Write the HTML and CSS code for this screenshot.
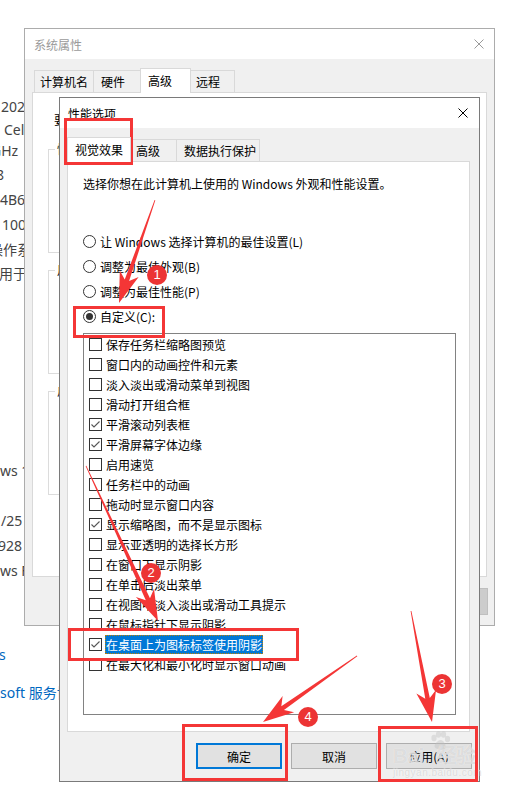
FILE: index.html
```html
<!DOCTYPE html>
<html lang="zh-CN">
<head>
<meta charset="utf-8">
<title>性能选项</title>
<link rel="stylesheet" href="styles.css">
</head>
<body>
<div class="desktop">
  <div class="page">
    <div class="lines lines-a">
      <div class="ln sh-1">2022</div>
      <div class="ln sh-4">Celeron(R) CPU</div>
      <div class="ln sh-n9">GHz</div>
      <div class="ln sh-n4">8</div>
      <div class="ln">4B6-7</div>
      <div class="ln sh-2">1000</div>
      <div class="ln sh-n11">操作系统</div>
      <div class="ln sh-n1">用于</div>
    </div>
    <div class="lines lines-b">
      <div class="ln">ws 10 家庭中文版</div>
      <div class="ln"></div>
      <div class="ln sh-1">/25</div>
      <div class="ln sh-n2">928</div>
      <div class="ln">ws Feature Experience Pack</div>
    </div>
    <div class="lines lines-c">
      <div class="ln sh-n1">s</div>
      <div class="ln"></div>
      <div class="ln">soft 服务协议</div>
    </div>
  </div>

  <section class="win win-outer">
    <header class="titlebar outer-title">
      <span>系统属性</span>
      <span class="close"><svg width="10" height="10" viewBox="0 0 10 10"><path d="M0.5 0.5L9.5 9.5M9.5 0.5L0.5 9.5" stroke="#9a9a9a" stroke-width="1"/></svg></span>
    </header>
    <div class="win-body outer-body">
      <nav class="tabs outer-tabs">
        <span class="tab t-name">计算机名</span><span class="tab t-hw">硬件</span><span class="tab on t-adv">高级</span><span class="tab t-rem">远程</span>
      </nav>
      <div class="panel outer-panel">
        <p class="note">要进行大多数更改，你必须作为管理员登录。</p>
        <fieldset class="group"><legend>性能</legend></fieldset>
        <fieldset class="group"><legend>用户配置文件</legend></fieldset>
        <fieldset class="group"><legend>启动和故障恢复</legend></fieldset>
      </div>
      <div class="btnrow outer-btns">
        <button class="obtn">确定</button><button class="obtn">取消</button><button class="obtn dis">应用(A)</button>
      </div>
    </div>
  </section>

  <section class="win win-inner">
    <header class="titlebar inner-title">
      <span>性能选项</span>
      <span class="close"><svg width="10" height="10" viewBox="0 0 10 10"><path d="M0.5 0.5L9.5 9.5M9.5 0.5L0.5 9.5" stroke="#000" stroke-width="1"/></svg></span>
    </header>
    <div class="win-body inner-body">
      <nav class="tabs">
        <span class="tab on t-vis">视觉效果</span><span class="tab t-adv2">高级</span><span class="tab t-dep">数据执行保护</span>
      </nav>
      <div class="panel inner-panel">
        <p class="intro">选择你想在此计算机上使用的 Windows 外观和性能设置。</p>
        <ul class="radios">
          <li><svg class="rb" width="13" height="13" viewBox="0 0 13 13"><circle cx="6.5" cy="6.5" r="6" fill="#fff" stroke="#333"/></svg>让 Windows 选择计算机的最佳设置(L)</li>
          <li><svg class="rb" width="13" height="13" viewBox="0 0 13 13"><circle cx="6.5" cy="6.5" r="6" fill="#fff" stroke="#333"/></svg>调整为最佳外观(B)</li>
          <li><svg class="rb" width="13" height="13" viewBox="0 0 13 13"><circle cx="6.5" cy="6.5" r="6" fill="#fff" stroke="#333"/></svg>调整为最佳性能(P)</li>
          <li><svg class="rb" width="13" height="13" viewBox="0 0 13 13"><circle cx="6.5" cy="6.5" r="6" fill="#fff" stroke="#333"/><circle cx="6.5" cy="6.5" r="3.5" fill="#333"/></svg>自定义(C):</li>
        </ul>
        <ul class="listbox">
          <li><svg class="cb" width="13" height="13" viewBox="0 0 13 13"><rect x="0.5" y="0.5" width="12" height="12" fill="#fff" stroke="#333"/></svg><span>保存任务栏缩略图预览</span></li>
          <li><svg class="cb" width="13" height="13" viewBox="0 0 13 13"><rect x="0.5" y="0.5" width="12" height="12" fill="#fff" stroke="#333"/></svg><span>窗口内的动画控件和元素</span></li>
          <li><svg class="cb" width="13" height="13" viewBox="0 0 13 13"><rect x="0.5" y="0.5" width="12" height="12" fill="#fff" stroke="#333"/></svg><span>淡入淡出或滑动菜单到视图</span></li>
          <li><svg class="cb" width="13" height="13" viewBox="0 0 13 13"><rect x="0.5" y="0.5" width="12" height="12" fill="#fff" stroke="#333"/></svg><span>滑动打开组合框</span></li>
          <li><svg class="cb" width="13" height="13" viewBox="0 0 13 13"><rect x="0.5" y="0.5" width="12" height="12" fill="#fff" stroke="#333"/><path d="M2.5 6.5L5 9L10.5 3.5" fill="none" stroke="#555" stroke-width="1.1"/></svg><span>平滑滚动列表框</span></li>
          <li><svg class="cb" width="13" height="13" viewBox="0 0 13 13"><rect x="0.5" y="0.5" width="12" height="12" fill="#fff" stroke="#333"/><path d="M2.5 6.5L5 9L10.5 3.5" fill="none" stroke="#555" stroke-width="1.1"/></svg><span>平滑屏幕字体边缘</span></li>
          <li><svg class="cb" width="13" height="13" viewBox="0 0 13 13"><rect x="0.5" y="0.5" width="12" height="12" fill="#fff" stroke="#333"/></svg><span>启用速览</span></li>
          <li><svg class="cb" width="13" height="13" viewBox="0 0 13 13"><rect x="0.5" y="0.5" width="12" height="12" fill="#fff" stroke="#333"/></svg><span>任务栏中的动画</span></li>
          <li><svg class="cb" width="13" height="13" viewBox="0 0 13 13"><rect x="0.5" y="0.5" width="12" height="12" fill="#fff" stroke="#333"/></svg><span>拖动时显示窗口内容</span></li>
          <li><svg class="cb" width="13" height="13" viewBox="0 0 13 13"><rect x="0.5" y="0.5" width="12" height="12" fill="#fff" stroke="#333"/><path d="M2.5 6.5L5 9L10.5 3.5" fill="none" stroke="#555" stroke-width="1.1"/></svg><span>显示缩略图，而不是显示图标</span></li>
          <li><svg class="cb" width="13" height="13" viewBox="0 0 13 13"><rect x="0.5" y="0.5" width="12" height="12" fill="#fff" stroke="#333"/></svg><span>显示亚透明的选择长方形</span></li>
          <li><svg class="cb" width="13" height="13" viewBox="0 0 13 13"><rect x="0.5" y="0.5" width="12" height="12" fill="#fff" stroke="#333"/></svg><span>在窗口下显示阴影</span></li>
          <li><svg class="cb" width="13" height="13" viewBox="0 0 13 13"><rect x="0.5" y="0.5" width="12" height="12" fill="#fff" stroke="#333"/></svg><span>在单击后淡出菜单</span></li>
          <li><svg class="cb" width="13" height="13" viewBox="0 0 13 13"><rect x="0.5" y="0.5" width="12" height="12" fill="#fff" stroke="#333"/></svg><span>在视图中淡入淡出或滑动工具提示</span></li>
          <li><svg class="cb" width="13" height="13" viewBox="0 0 13 13"><rect x="0.5" y="0.5" width="12" height="12" fill="#fff" stroke="#333"/></svg><span>在鼠标指针下显示阴影</span></li>
          <li><svg class="cb" width="13" height="13" viewBox="0 0 13 13"><rect x="0.5" y="0.5" width="12" height="12" fill="#fff" stroke="#333"/><path d="M2.5 6.5L5 9L10.5 3.5" fill="none" stroke="#555" stroke-width="1.1"/></svg><span class="sel">在桌面上为图标标签使用阴影</span></li>
          <li><svg class="cb" width="13" height="13" viewBox="0 0 13 13"><rect x="0.5" y="0.5" width="12" height="12" fill="#fff" stroke="#333"/></svg><span>在最大化和最小化时显示窗口动画</span></li>
        </ul>
      </div>
      <div class="btnrow">
        <button class="btn default">确定</button><button class="btn">取消</button><button class="btn">应用(A)</button>
      </div>
    </div>
  </section>

  <div class="marks">
    <div class="wm">
      <svg class="wm-paw" width="22" height="20" viewBox="0 0 22 20"><ellipse cx="5" cy="7" rx="2.6" ry="3.2"/><ellipse cx="9.5" cy="3.5" rx="2.6" ry="3.2"/><ellipse cx="14.5" cy="3.5" rx="2.6" ry="3.2"/><ellipse cx="18.5" cy="8" rx="2.6" ry="3.2"/><path d="M11.5 9c3 0 6 5 5 8s-7 2-10 0 2-8 5-8z"/></svg>
      <div class="wm-row"><span>Bai</span><span>经验</span></div>
      <div class="wm-url">jingyan.baidu.com</div>
    </div>
    <div class="box box-1"></div>
    <div class="box box-2"></div>
    <div class="box box-3"></div>
    <div class="box box-4"></div>
    <div class="box box-5"></div>
    <svg class="arrows" width="516" height="789" viewBox="0 0 516 789">
      <g fill="#f43636">
        <g transform="translate(119 303) rotate(109.26)"><polygon points="-109,-0.4 -24,-2.3 -31,-10 0,0 -31,10 -24,2.3 -109,0.4"/></g>
        <g transform="translate(158 621) rotate(65.09)"><polygon points="-171,-0.4 -24,-2.3 -31,-10 0,0 -31,10 -24,2.3 -171,0.4"/></g>
        <g transform="translate(432 722) rotate(79.29)"><polygon points="-113,-0.4 -24,-2.3 -31,-10 0,0 -31,10 -24,2.3 -113,0.4"/></g>
        <g transform="translate(263 722) rotate(144.92)"><polygon points="-115,-0.4 -24,-2.3 -31,-10 0,0 -31,10 -24,2.3 -115,0.4"/></g>
      </g>
    </svg>
    <div class="badge badge-1">1</div>
    <div class="badge badge-2">2</div>
    <div class="badge badge-3">3</div>
    <div class="badge badge-4">4</div>
  </div>
</div>
</body>
</html>
```
FILE: styles.css
```css
* { box-sizing: border-box; }
html, body { margin: 0; padding: 0; background: #fff; }
body {
  font-family: "Noto Sans CJK SC", "Noto Sans", sans-serif;
  font-size: 12px;
  color: #000;
}
.desktop {
  position: relative;
  width: 516px;
  height: 789px;
  overflow: hidden;
  background: #fff;
}

/* background page behind the dialogs */
.page {
  font-family: "Noto Sans", "Noto Sans CJK SC", sans-serif;
  font-size: 14px;
  color: #444;
}
.lines { display: grid; }
.lines-a { margin-top: 95px; grid-template-rows: 24px 21px 22px 25px 25px 25px 25px 24px; }
.lines-b { margin-top: 173px; grid-template-rows: 24px 25px 25px 25px 25px; }
.lines-c { margin-top: 60px; grid-template-rows: 24px 14px 24px; color: #0067c0; }
.ln { display: flex; align-items: center; white-space: nowrap; line-height: 1; }
.sh-1 { margin-left: 1px; }
.sh-2 { margin-left: 2px; }
.sh-4 { margin-left: 4px; }
.sh-n1 { margin-left: -1px; }
.sh-n2 { margin-left: -2px; }
.sh-n4 { margin-left: -4px; }
.sh-n9 { margin-left: -9px; }
.sh-n11 { margin-left: -11px; }

/* windows */
.win {
  position: absolute;
  display: flex;
  flex-direction: column;
  background: #f0f0f0;
}
.win-outer { left: 24px; top: 28px; width: 471px; height: 598px; border: 1px solid #acacac; }
.win-inner { left: 59px; top: 97px; width: 421px; height: 685px; border: 1px solid #7a7a7a; }

.titlebar {
  height: 30px;
  flex: none;
  background: #fff;
  display: flex;
  align-items: center;
  justify-content: space-between;
  font-size: 12px;
}
.outer-title { padding-left: 9px; color: #9a9a9a; }
.inner-title { padding-left: 8px; color: #000; }
.close {
  width: 30px;
  height: 30px;
  display: flex;
  align-items: center;
  justify-content: center;
}
.inner-title .close { margin-right: 1px; }

.win-body { flex: 1; display: flex; flex-direction: column; }
.outer-body { padding: 9px 8px 0 7px; }
.inner-body { padding: 9px 7px 12px 7px; }

/* tabs */
.tabs {
  height: 24px;
  flex: none;
  display: flex;
  align-items: flex-end;
}
.outer-tabs { padding-left: 2px; }
.tab {
  height: 22px;
  border: 1px solid #d9d9d9;
  border-bottom: none;
  background: #f0f0f0;
  line-height: 21px;
  padding: 0 10px;
  margin-left: -1px;
  white-space: nowrap;
}
.tab:first-child { margin-left: 0; }
.tab.on {
  height: 25px;
  line-height: 24px;
  background: #fff;
  margin-bottom: -1px;
  position: relative;
  z-index: 1;
}
.t-name { padding: 0 5px; }
.t-hw { padding: 0 15px 0 7px; }
.t-adv { padding: 0 18px 0 7px; }
.t-rem { padding: 0 14px 0 5px; }
.t-vis { padding: 0 7px; }
.t-adv2 { padding: 0 16px 0 5px; }
.t-dep { padding: 0 3px 0 7px; }

.panel {
  flex: none;
  background: #fff;
  border: 1px solid #d9d9d9;
}

/* outer panel */
.outer-panel {
  height: 485px;
  margin-right: -1px;
  padding: 18px 15px 0 15px;
}
.note { margin: 0 0 0 6px; line-height: 18px; white-space: nowrap; }
.group {
  margin: 8px 0 0;
  height: 113px;
  border: 1px solid #dcdcdc;
  padding: 0;
}
.note + .group { margin-top: 11px; }
.group legend {
  font-size: 12px;
  line-height: 18px;
  padding: 0 2px;
  margin-left: 6px;
}
.outer-btns {
  display: flex;
  justify-content: flex-end;
  gap: 6px;
  margin: 10px -2px 0 0;
}
.obtn {
  width: 75px;
  height: 27px;
  padding: 0;
  font: 12px "Noto Sans CJK SC", sans-serif;
  background: #e1e1e1;
  border: 1px solid #adadad;
}
.obtn.dis { background: #cccccc; border-color: #bfbfbf; color: #838383; }

/* inner panel */
.inner-panel {
  height: 571px;
  margin-right: 2px;
  padding: 13px 0 0 15px;
}
.intro { margin: 0; line-height: 18px; white-space: nowrap; }
.radios { list-style: none; margin: 36px 0 0; padding: 0; }
.radios li {
  height: 25px;
  display: flex;
  align-items: center;
  gap: 4px;
  white-space: nowrap;
}
.rb, .cb { flex: none; display: block; }

.listbox {
  list-style: none;
  margin: 4px 0 0;
  padding: 0;
  width: 373px;
  height: 382px;
  border: 1px solid #828282;
  background: #fff;
}
.listbox li {
  height: 20px;
  display: flex;
  align-items: center;
  gap: 4px;
  padding-left: 5px;
  white-space: nowrap;
}
.listbox .sel {
  display: block;
  height: 19px;
  line-height: 19px;
  margin-left: -1px;
  padding: 0 1px;
  background: #0078d7;
  color: #fff;
  outline: 1px dotted #c08000;
  outline-offset: -1px;
}

.btnrow {
  flex: none;
  display: flex;
  justify-content: flex-end;
  gap: 9px;
  margin-top: 11px;
}
.btn {
  width: 86px;
  height: 26px;
  padding: 0;
  font: 12px "Noto Sans CJK SC", sans-serif;
  color: #000;
  background: #e1e1e1;
  border: 1px solid #adadad;
}
.btn.default { border: 2px solid #0078d7; }

/* annotations */
.marks {
  position: absolute;
  left: 0;
  top: 0;
  width: 516px;
  height: 789px;
  pointer-events: none;
}
.box { position: absolute; border: 3px solid #f43636; }
.box-1 { left: 64px; top: 118px; width: 69px; height: 47px; }
.box-2 { left: 73px; top: 306px; width: 92px; height: 32px; }
.box-3 { left: 68px; top: 628px; width: 231px; height: 33px; }
.box-4 { left: 182px; top: 724px; width: 106px; height: 57px; }
.box-5 { left: 378px; top: 726px; width: 100px; height: 56px; }
.arrows { position: absolute; left: 0; top: 0; }
.badge {
  position: absolute;
  width: 20px;
  height: 20px;
  border-radius: 50%;
  background: #ec3434;
  color: #fff;
  font: 13px/20px "Liberation Sans", sans-serif;
  text-align: center;
}
.badge-1 { left: 147px; top: 265px; }
.badge-2 { left: 141px; top: 563px; }
.badge-3 { left: 432px; top: 674px; }
.badge-4 { left: 298px; top: 707px; }

.wm {
  position: absolute;
  left: 393px;
  top: 731px;
  width: 100px;
  color: rgba(175, 175, 175, 0.4);
  text-shadow: 0 0 1px rgba(255, 255, 255, 0.9);
}
.wm-paw { display: block; margin-left: 36px; fill: rgba(190, 190, 190, 0.4); }
.wm-row {
  display: flex;
  gap: 12px;
  margin-top: -6px;
  font: bold 20px/22px "Liberation Sans", "Noto Sans CJK SC", sans-serif;
}
.wm-url { font: 10px/12px "Liberation Sans", sans-serif; letter-spacing: 0.5px; }
```
